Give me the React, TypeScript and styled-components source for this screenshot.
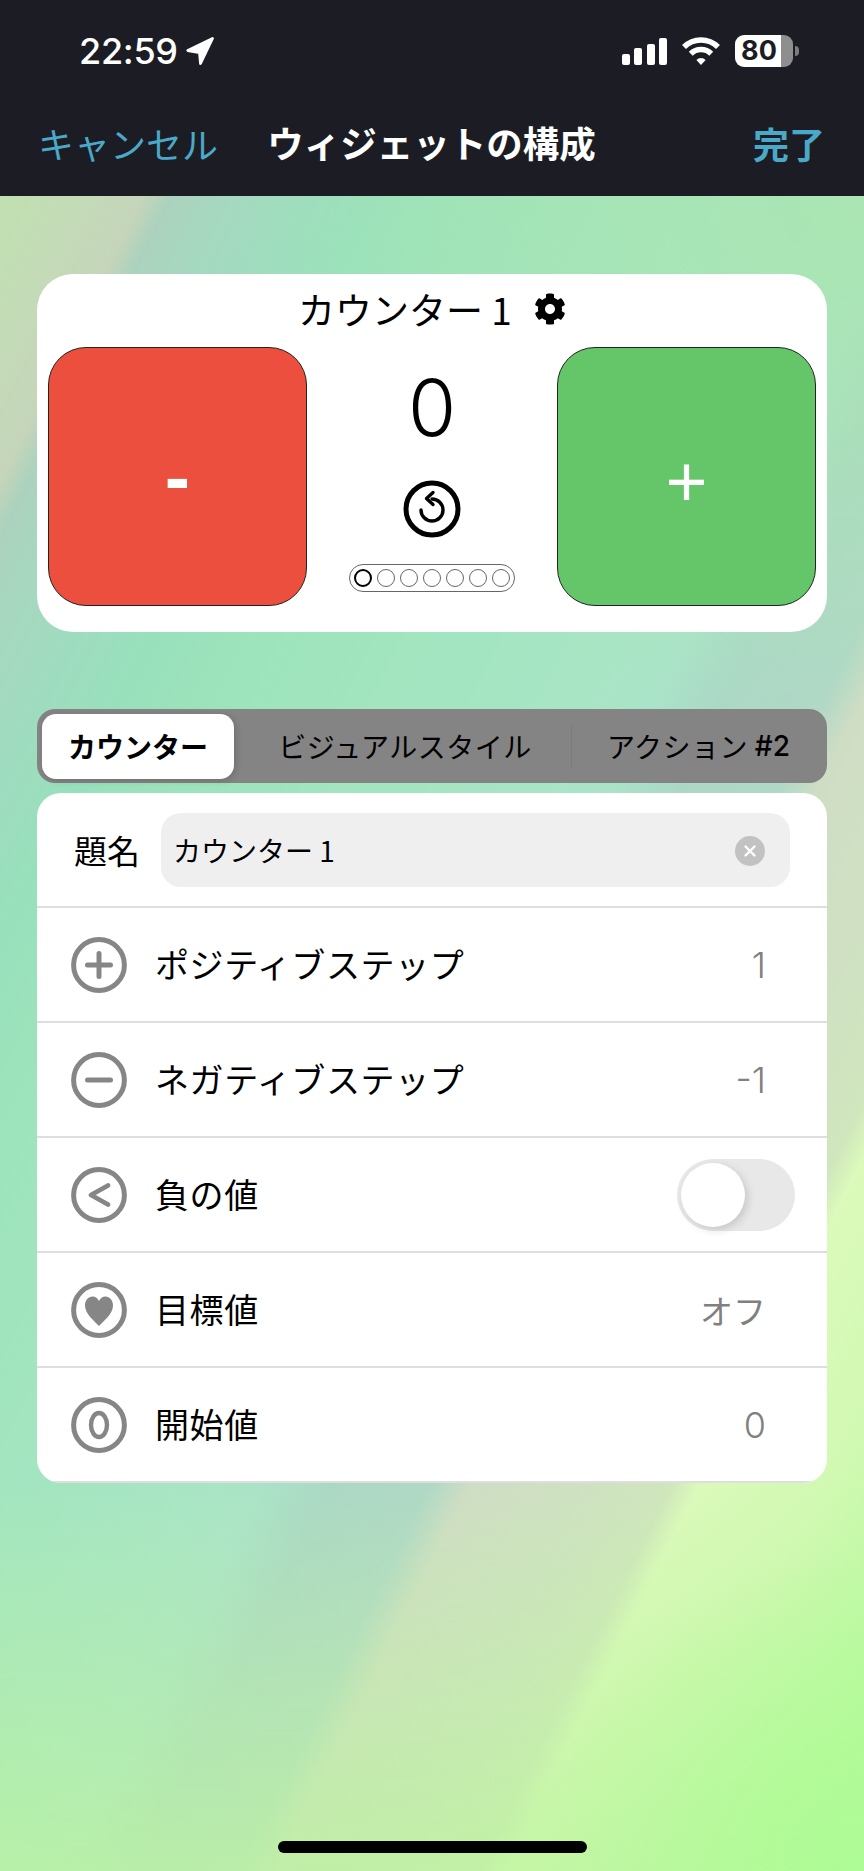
import { FaCog } from "react-icons/fa";
import styled, { createGlobalStyle } from "styled-components";

const JP = `"Noto Sans CJK JP", "Noto Sans", sans-serif`;
const LATIN = `Inter, "Noto Sans CJK JP", sans-serif`;
const GREY = "#868686";

const GlobalStyle = createGlobalStyle`
  html, body {
    margin: 0;
    padding: 0;
  }
  body {
    width: 864px;
    font-family: ${JP};
  }
`;

type RowItem = {
  icon: "plus" | "minus" | "less" | "heart" | "zero";
  label: string;
  value: string;
};

const rows: RowItem[] = [
  { icon: "plus", label: "ポジティブステップ", value: "1" },
  { icon: "minus", label: "ネガティブステップ", value: "-1" },
  { icon: "less", label: "負の値", value: "" },
  { icon: "heart", label: "目標値", value: "オフ" },
  { icon: "zero", label: "開始値", value: "0" },
];

function RowIcon({ icon }: { icon: RowItem["icon"] }) {
  return (
    <svg width="56" height="56" viewBox="0 0 56 56" fill="none" stroke={GREY}>
      <circle cx="28" cy="28" r="25.4" strokeWidth="5" />
      {icon === "plus" && (
        <path d="M28 16.500V39.500M16.500 28H39.500" strokeWidth="5" strokeLinecap="round" />
      )}
      {icon === "minus" && <path d="M16.500 28H39.500" strokeWidth="5" strokeLinecap="round" />}
      {icon === "less" && <path d="M37 18.500L20 28L37 37.500" strokeWidth="4.800" strokeLinecap="round" strokeLinejoin="round" />}
      {icon === "heart" && (
        <path
          d="M28 44C23 38.500 14 32 14 23.500C14 18 17.500 14.500 21.500 14.500C24.500 14.500 26.800 16.300 28 19C29.200 16.300 31.500 14.500 34.500 14.500C38.500 14.500 42 18 42 23.500C42 32 33 38.500 28 44Z"
          fill={GREY}
          stroke="none"
        />
      )}
      {icon === "zero" && <ellipse cx="28" cy="28" rx="8" ry="12" strokeWidth="4.400" />}
    </svg>
  );
}

export default function App() {
  return (
    <>
      <GlobalStyle />
      <Screen>
        <Header>
          <StatusBar>
            <TimeBlock>
              <Time>22:59</Time>
              <svg width="28" height="28" viewBox="0 0 28 28">
                <path
                  d="M26.500 1.500L1.800 13.500L13.500 15.500L14.500 26.500Z"
                  fill="#fff"
                  stroke="#fff"
                  strokeWidth="2.800"
                  strokeLinejoin="round"
                />
              </svg>
            </TimeBlock>
            <StatusIcons>
              <SignalBars>
                {[11, 17, 21, 27].map((h) => (
                  <SignalBar key={h} $height={h} />
                ))}
              </SignalBars>
              <svg width="38" height="28" viewBox="0 0 38 28" fill="none" stroke="#fff">
                <path d="M2 10A24 24 0 0 1 36 10" strokeWidth="5.500" />
                <path d="M8.750 16.750A14.500 14.500 0 0 1 29.250 16.750" strokeWidth="5.500" />
                <path d="M19 28L14.400 23A6.500 6.500 0 0 1 23.600 23Z" fill="#fff" stroke="none" />
              </svg>
              <Battery>80</Battery>
            </StatusIcons>
          </StatusBar>
          <NavBar>
            <CancelButton>キャンセル</CancelButton>
            <NavTitle>ウィジェットの構成</NavTitle>
            <DoneButton>完了</DoneButton>
          </NavBar>
        </Header>

        <Content>
          <WidgetCard>
            <WidgetTitle>
              <span>カウンター 1</span>
              <FaCog size={32} color="#000" />
            </WidgetTitle>
            <WidgetBody>
              <StepButton $color="#ec4f3d">
                <MinusGlyph>-</MinusGlyph>
              </StepButton>
              <CenterColumn>
                <CountValue>0</CountValue>
                <svg width="58" height="58" viewBox="0 0 58 58" fill="none" stroke="#000">
                  <circle cx="29" cy="29" r="26" strokeWidth="5" />
                  <path d="M29 19A11 11 0 1 1 18 30" strokeWidth="3.400" strokeLinecap="round" />
                  <path d="M30 12.500L23.500 18.500L30 24.500" strokeWidth="3.400" strokeLinecap="round" strokeLinejoin="round" />
                </svg>
                <PagePill>
                  {[0, 1, 2, 3, 4, 5, 6].map((i) => (
                    <PageDot key={i} $active={i === 0} />
                  ))}
                </PagePill>
              </CenterColumn>
              <StepButton $color="#65c669">
                <PlusGlyph>+</PlusGlyph>
              </StepButton>
            </WidgetBody>
          </WidgetCard>

          <Segmented>
            <SelectedTab>カウンター</SelectedTab>
            <Tab $shift={5}>ビジュアルスタイル</Tab>
            <Tab $shift={3} $divider>
              アクション <TabNumber>#2</TabNumber>
            </Tab>
          </Segmented>

          <FormCard>
            <TitleRow>
              <TitleLabel>題名</TitleLabel>
              <InputBox>
                <InputText>カウンター 1</InputText>
                <ClearButton>
                  <svg width="14" height="14" viewBox="0 0 14 14" stroke="#fff" strokeWidth="2.400" strokeLinecap="round">
                    <path d="M2.500 2.500L11.500 11.500M11.500 2.500L2.500 11.500" />
                  </svg>
                </ClearButton>
              </InputBox>
            </TitleRow>
            {rows.map((row) => (
              <Row key={row.label}>
                <RowIcon icon={row.icon} />
                <RowLabel>{row.label}</RowLabel>
                {row.value ? (
                  <RowValue $latin={row.value !== "オフ"}>{row.value}</RowValue>
                ) : (
                  <Toggle>
                    <ToggleThumb />
                  </Toggle>
                )}
              </Row>
            ))}
          </FormCard>
        </Content>

        <HomeBar />
      </Screen>
    </>
  );
}

const Screen = styled.div`
  width: 864px;
  height: 1871px;
  display: flex;
  flex-direction: column;
  overflow: hidden;
  background:
    radial-gradient(320px 320px at 864px 1871px, rgba(172, 253, 148, 0.9), rgba(172, 253, 148, 0)),
    radial-gradient(640px 520px at 864px 196px, rgba(170, 229, 176, 0.9), rgba(170, 229, 176, 0)),
    linear-gradient(180deg, rgba(188, 244, 158, 0) 1480px, rgba(188, 244, 158, 0.75) 1871px),
    linear-gradient(
      116.6deg,
      #bfe0ae 0,
      #c0e0b0 88px,
      #c4dab8 170px,
      #c5d5ba 216px,
      #acd2be 240px,
      #a6d8c0 290px,
      #9fdcbf 350px,
      #98e0bc 420px,
      #9ce3bb 500px,
      #a2e5bf 660px,
      #a8e5c5 840px,
      #aae3c8 900px,
      #abd8c5 960px,
      #b0d8c6 1050px,
      #cfddc4 1085px,
      #cfe2c2 1200px,
      #d0e6bd 1265px,
      #dbfabb 1290px,
      #d2f9b3 1400px,
      #b8fb9f 1550px
    );
`;

const Header = styled.header`
  height: 196px;
  flex: none;
  background: #1c1d24;
  box-sizing: border-box;
  padding-top: 35px;
`;

const StatusBar = styled.div`
  height: 32px;
  display: flex;
  align-items: center;
  justify-content: space-between;
  padding: 0 66px 0 79px;
`;

const TimeBlock = styled.div`
  display: flex;
  align-items: center;
  gap: 8px;
  color: #fff;
`;

const Time = styled.span`
  font-family: ${LATIN};
  font-size: 36px;
  font-weight: 500;
  line-height: 32px;
  letter-spacing: -0.3px;
`;

const StatusIcons = styled.div`
  display: flex;
  align-items: center;
  gap: 15px;
`;

const SignalBars = styled.div`
  display: flex;
  align-items: flex-end;
  gap: 4.5px;
  height: 27px;
`;

const SignalBar = styled.div<{ $height: number }>`
  width: 8px;
  height: ${({ $height }) => $height}px;
  border-radius: 2px;
  background: #fff;
`;

const Battery = styled.div`
  position: relative;
  width: 58px;
  height: 32px;
  margin-right: 5px;
  border-radius: 9px;
  background: linear-gradient(90deg, #fff 79%, #8e8e8e 79%);
  color: #1c1d24;
  font-family: ${LATIN};
  font-size: 27px;
  font-weight: 700;
  line-height: 32px;
  text-align: center;
  padding-right: 10px;
  box-sizing: border-box;

  &::after {
    content: "";
    position: absolute;
    top: 11px;
    right: -6px;
    width: 4px;
    height: 10px;
    border-radius: 0 5px 5px 0;
    background: #7c7c7c;
  }
`;

const NavBar = styled.nav`
  display: grid;
  grid-template-columns: 1fr auto 1fr;
  align-items: center;
  margin-top: 53px;
  padding: 0 39px 0 38px;
  font-size: 36px;
  line-height: 46px;
`;

const CancelButton = styled.span`
  color: #4aa9c9;
`;

const NavTitle = styled.span`
  color: #fff;
  font-size: 36.5px;
  font-weight: 700;
`;

const DoneButton = styled.span`
  color: #4aa9c9;
  font-weight: 700;
  justify-self: end;
`;

const Content = styled.main`
  display: flex;
  flex-direction: column;
  padding: 78px 37px 0;
`;

const WidgetCard = styled.section`
  height: 358px;
  border-radius: 36px;
  background: #fff;
  box-sizing: border-box;
  padding: 0 11px;
`;

const WidgetTitle = styled.div`
  height: 69px;
  margin-bottom: 4px;
  display: flex;
  align-items: center;
  justify-content: center;
  gap: 22px;
  font-size: 37px;
  line-height: 40px;
  color: #000;
`;

const WidgetBody = styled.div`
  display: flex;
  justify-content: space-between;
`;

const StepButton = styled.div<{ $color: string }>`
  width: 259px;
  height: 259px;
  display: flex;
  align-items: center;
  justify-content: center;
  box-sizing: border-box;
  border: 1px solid #222;
  border-radius: 38px;
  background: ${({ $color }) => $color};
  color: #fff;
  font-family: "Liberation Sans", sans-serif;
`;

const MinusGlyph = styled.span`
  font-size: 76px;
  font-weight: 700;
  line-height: 1;
`;

const PlusGlyph = styled.span`
  margin-top: 8px;
  font-size: 72px;
  line-height: 1;
`;

const CenterColumn = styled.div`
  flex: 1;
  display: flex;
  flex-direction: column;
  align-items: center;
`;

const CountValue = styled.div`
  margin-top: 13px;
  height: 120px;
  font-family: ${LATIN};
  font-size: 78px;
  font-weight: 350;
  line-height: 96px;
  color: #000;
`;

const PagePill = styled.div`
  display: flex;
  align-items: center;
  gap: 5px;
  margin-top: 26px;
  width: 166px;
  height: 28px;
  box-sizing: border-box;
  padding: 0 4px;
  border: 1px solid #666;
  border-radius: 14px;
`;

const PageDot = styled.div<{ $active: boolean }>`
  width: 18px;
  height: 18px;
  flex: none;
  box-sizing: border-box;
  border-radius: 50%;
  border: ${({ $active }) => ($active ? "2.5px solid #000" : "1px solid #666")};
`;

const Segmented = styled.div`
  display: grid;
  grid-template-columns: 192px 337px 1fr;
  align-items: center;
  height: 74px;
  margin-top: 77px;
  box-sizing: border-box;
  padding: 0 5px;
  border-radius: 18px;
  background: #848484;
  font-size: 28px;
  color: #000;
`;

const SelectedTab = styled.div`
  height: 65px;
  display: flex;
  align-items: center;
  justify-content: center;
  border-radius: 14px;
  background: #fff;
  font-weight: 700;
  box-shadow: 2px 2px 6px rgba(0, 0, 0, 0.15);
`;

const Tab = styled.div<{ $divider?: boolean; $shift: number }>`
  height: 44px;
  display: flex;
  align-items: center;
  justify-content: center;
  white-space: pre;
  letter-spacing: 0.5px;
  padding-left: ${({ $shift }) => $shift}px;
  border-left: ${({ $divider }) => ($divider ? "1px solid #7c7c7c" : "0")};
`;

const TabNumber = styled.span`
  font-family: ${LATIN};
  font-size: 28px;
  font-weight: 500;
  letter-spacing: 0;
`;

const FormCard = styled.section`
  margin-top: 10px;
  border-radius: 24px;
  background: #fff;
  overflow: hidden;
`;

const BaseRow = styled.div`
  height: 115px;
  display: flex;
  align-items: center;
  box-sizing: border-box;
  border-bottom: 2px solid #dedede;
`;

const TitleRow = styled(BaseRow)`
  padding: 0 37px;
  gap: 21px;
`;

const TitleLabel = styled.span`
  font-size: 33px;
  color: #000;
`;

const InputBox = styled.div`
  flex: 1;
  height: 74px;
  display: flex;
  align-items: center;
  justify-content: space-between;
  padding: 0 25px 0 12px;
  border-radius: 20px;
  background: #efefef;
`;

const InputText = styled.span`
  font-size: 28px;
  color: #000;
`;

const ClearButton = styled.div`
  width: 30px;
  height: 30px;
  margin-top: 2px;
  display: flex;
  align-items: center;
  justify-content: center;
  border-radius: 50%;
  background: #c2c2c2;
`;

const Row = styled(BaseRow)`
  padding: 0 61px 0 34px;
  gap: 28px;
`;

const RowLabel = styled.span`
  flex: 1;
  margin-top: -2px;
  font-size: 34px;
  letter-spacing: 0.6px;
  color: #000;
`;

const RowValue = styled.span<{ $latin: boolean }>`
  font-family: ${({ $latin }) => ($latin ? LATIN : JP)};
  font-size: ${({ $latin }) => ($latin ? "36px" : "33px")};
  font-weight: ${({ $latin }) => ($latin ? 300 : 400)};
  color: #808080;
`;

const Toggle = styled.div`
  width: 118px;
  height: 72px;
  margin-right: -29px;
  display: flex;
  align-items: center;
  box-sizing: border-box;
  padding: 0 4px;
  border-radius: 36px;
  background: #e8e8e8;
`;

const ToggleThumb = styled.div`
  width: 64px;
  height: 64px;
  border-radius: 50%;
  background: #fff;
  box-shadow: 3px 3px 8px rgba(0, 0, 0, 0.14);
`;

const HomeBar = styled.div`
  width: 309px;
  height: 12px;
  flex: none;
  margin: auto auto 18px;
  border-radius: 6px;
  background: #000;
`;
